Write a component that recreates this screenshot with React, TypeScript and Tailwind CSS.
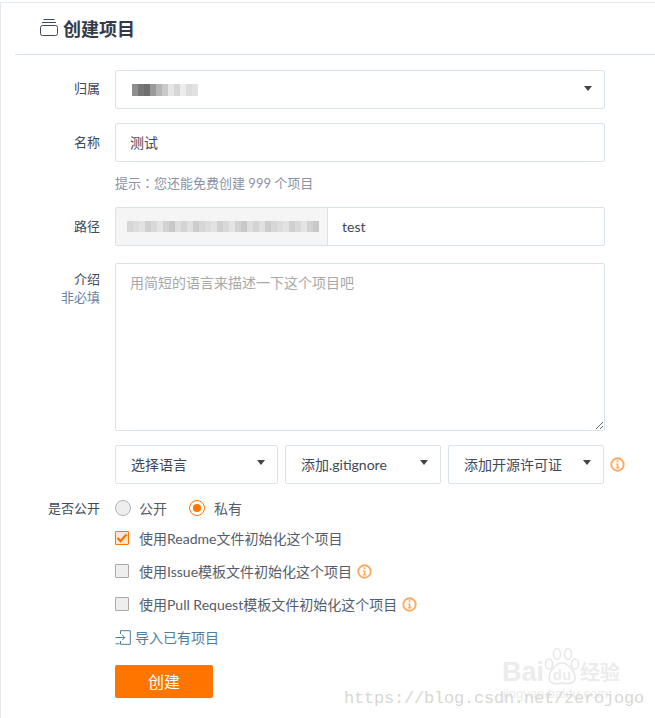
import React from 'react';

const font = '[font-family:"Lato","Noto_Sans_CJK_SC",sans-serif]';

// blurred-out account names in the original shot
const ownerBlur = ['#8f8f8f', '#777777', '#6f6f6f', '#9a9a9a', '#b5b5b5', '#c9c9c9', '#e6e6e6', '#d6d6d6', '#ececec', '#dcdcdc', '#e2e2e2'];
const pathBlur = ['#d6d6d6', '#dcdcdc', '#e2e2e2', '#cfcfcf', '#d9d9d9', '#e4e4e4', '#d2d2d2', '#c8c8c8', '#dedede', '#d4d4d4', '#e0e0e0', '#cccccc'];

const Caret = () => (
  <svg width="8" height="5" viewBox="0 0 8 5" className="shrink-0">
    <path d="M0 0h8L4 5z" fill="#444444" />
  </svg>
);

const InfoIcon = () => (
  <svg width="15" height="15" viewBox="0 0 15 15" className="shrink-0">
    <circle cx="7.5" cy="7.5" r="6.2" fill="none" stroke="#ffa95e" strokeWidth="1.9" />
    <rect x="6.6" y="3.4" width="1.9" height="1.9" fill="#ffa95e" />
    <path d="M5.8 6.4h2.600v3.900h1v1.100H5.700v-1.100h1.100V7.500h-1z" fill="#ffa95e" />
  </svg>
);

const Row = ({ label, sub, labelPad, className, children }: { label?: string; sub?: string; labelPad?: string; className?: string; children: React.ReactNode }) => (
  <div className={`flex gap-[15px] ${className ?? ''}`}>
    <div className={`w-[99px] shrink-0 text-right text-[13px] leading-[18px] text-[#40485b] ${labelPad ?? ''}`}>
      {label}
      {sub && <div className="text-[#6a7f9c]">{sub}</div>}
    </div>
    <div className="w-[490px] min-w-0">{children}</div>
  </div>
);

const DropDown = ({ label, width }: { label: string; width: string }) => (
  <div className={`flex h-[39px] shrink-0 items-center justify-between rounded-[2px] border border-[#dce3e8] pl-[15px] pr-[12px] text-[14px] text-[#40485b] ${width}`}>
    <span>{label}</span>
    <span className="mb-[4px]"><Caret /></span>
  </div>
);

const CheckRow = ({ label, checked, info, className }: { label: string; checked?: boolean; info?: boolean; className?: string }) => (
  <div className={`flex h-[20px] items-center text-[14px] text-[#555c6b] ${className ?? ''}`}>
    {checked ? (
      <span className="mr-[10px] flex h-[14px] w-[14px] items-center justify-center rounded-[1px] border border-[#ff7500] bg-[#fbe6d3]">
        <svg width="12" height="10" viewBox="0 0 12 10">
          <path d="M1.5 5l3 3 6-6.500" fill="none" stroke="#ff7500" strokeWidth="2.4" />
        </svg>
      </span>
    ) : (
      <span className="mr-[10px] h-[14px] w-[14px] rounded-[1px] border border-[#a9a9a9] bg-[#eeeeee]" />
    )}
    <span>{label}</span>
    {info && <span className="ml-[5px] flex"><InfoIcon /></span>}
  </div>
);

export default function App() {
  return (
    <div className={`relative h-[718px] w-[655px] overflow-hidden bg-white ${font}`}>
      <div className="mt-[2px] h-[718px] border-l border-t border-[#e3e9ed]">
        <div className="ml-[14px] flex h-[52px] items-center border-b border-[#dce3e8] pl-[24px] pt-[2px]">
          <svg width="20" height="19" viewBox="0 0 20 19" className="mb-[5px] mr-[4px] shrink-0">
            <path d="M4.500 1.500h11M3 4.500h14" stroke="#40485b" strokeWidth="1" fill="none" />
            <rect x="1.500" y="7.500" width="17" height="10" rx="2" fill="none" stroke="#40485b" strokeWidth="1" />
          </svg>
          <h1 className="text-[18px] font-bold text-[#333a4a]">创建项目</h1>
        </div>

        <div className="pt-[15px]">
          <Row label="归属" labelPad="pt-[9px]">
            <div className="flex h-[39px] items-center justify-between rounded-[2px] border border-[#dce3e8] pl-[16px] pr-[12px]">
              <div className="flex">
                {ownerBlur.map((c, i) => (
                  <span key={i} className="h-[12px] w-[6px]" style={{ backgroundColor: c }} />
                ))}
              </div>
              <span className="mb-[2px]"><Caret /></span>
            </div>
          </Row>

          <Row label="名称" labelPad="pt-[10px]" className="mt-[14px]">
            <div className="flex h-[39px] items-center rounded-[2px] border border-[#dce3e8] px-[14px] text-[14px] text-[#40485b]">测试</div>
            <p className="mt-[12px] h-[18px] text-[13px] leading-[18px] text-[#8c92a4]">
              提示<span className="[font-family:'Noto_Sans_CJK_TC',sans-serif]">：</span>您还能免费创建 999 个项目
            </p>
          </Row>

          <Row label="路径" labelPad="pt-[10px]" className="mt-[15px]">
            <div className="flex h-[39px] rounded-[2px] border border-[#dce3e8] text-[14px] text-[#40485b]">
              <div className="flex w-[212px] items-center border-r border-[#dce3e8] bg-[#f5f5f5] pl-[11px]">
                <div className="flex">
                  {[...pathBlur, ...pathBlur, ...pathBlur].slice(0, 32).map((c, i) => (
                    <span key={i} className="h-[11px] w-[6px]" style={{ backgroundColor: c }} />
                  ))}
                </div>
              </div>
              <div className="flex items-center pl-[14px]">test</div>
            </div>
          </Row>

          <Row label="介绍" sub="非必填" labelPad="pt-[7px]" className="mt-[17px]">
            <textarea
              readOnly
              placeholder="用简短的语言来描述一下这个项目吧"
              className="block h-[168px] w-full rounded-[2px] border border-[#dce3e8] px-[14px] py-[9px] text-[14px] leading-[20px] outline-none placeholder:text-[#a8a8a8]"
            />
          </Row>

          <Row className="mt-[14px]">
            <div className="flex items-center">
              <DropDown label="选择语言" width="w-[163px]" />
              <span className="w-[7px] shrink-0" />
              <DropDown label="添加.gitignore" width="w-[156px]" />
              <span className="w-[7px] shrink-0" />
              <DropDown label="添加开源许可证" width="w-[156px]" />
              <span className="mb-[1px] ml-[6px] flex shrink-0"><InfoIcon /></span>
            </div>
          </Row>

          <Row label="是否公开" className="mt-[15px]">
            <div className="flex h-[18px] items-center text-[14px] text-[#555c6b]">
              <span className="mr-[8px] h-[16px] w-[16px] rounded-full border border-[#b5b5b5] bg-[#eeeeee]" />
              <span>公开</span>
              <span className="ml-[22px] mr-[9px] flex h-[16px] w-[16px] items-center justify-center rounded-full border border-[#ff7500]">
                <span className="h-[8px] w-[8px] rounded-full bg-[#ff7500]" />
              </span>
              <span>私有</span>
            </div>
          </Row>

          <Row className="mt-[11px]">
            <CheckRow label="使用Readme文件初始化这个项目" checked />
            <CheckRow label="使用Issue模板文件初始化这个项目" info className="mt-[13px]" />
            <CheckRow label="使用Pull Request模板文件初始化这个项目" info className="mt-[13px]" />
            <div className="mt-[13px] flex h-[20px] items-center text-[14px] text-[#4f7f9f]">
              <svg width="16" height="15" viewBox="0 0 16 15" className="mr-[4px] shrink-0">
                <path d="M5.500 4V.7h9.800v13.600H5.500V11M.5 7.500h9M7 4.700l2.800 2.800L7 10.300M.5 13.800h4" fill="none" stroke="#4f7f9f" strokeWidth="1" />
              </svg>
              <span>导入已有项目</span>
            </div>
            <button className="mt-[18px] flex h-[33px] w-[98px] items-center justify-center rounded-[2px] bg-[#ff7500] text-[16px] text-white">创建</button>
          </Row>
        </div>
      </div>

      {/* watermarks over the shot */}
      <div className="absolute left-[502px] top-[647px] flex h-[38px] items-end text-[#ececec]">
        <span className="text-[27px] font-bold leading-[26px] [font-family:'Liberation_Sans',sans-serif]">Bai</span>
        <span className="relative w-[36px] text-center text-[15px] font-bold leading-[20px] [font-family:'Liberation_Sans',sans-serif]">
          <svg width="36" height="38" viewBox="0 0 36 38" className="absolute bottom-0 left-0">
            <g fill="none" stroke="#e8e8e8" strokeWidth="1.600">
              <ellipse cx="5" cy="17" rx="3.500" ry="5" />
              <ellipse cx="13" cy="7" rx="3.500" ry="5.500" />
              <ellipse cx="24" cy="7" rx="3.500" ry="5.500" />
              <ellipse cx="31" cy="17" rx="3.500" ry="5" />
              <path d="M18 16c-6 0-13 8-13 15 0 5 6 7 13 5 7 2 13 0 13-5 0-7-7-15-13-15z" />
            </g>
          </svg>
          <span className="relative">du</span>
        </span>
        <span className="text-[20px] font-bold leading-[26px] [font-family:'Noto_Sans_CJK_SC',sans-serif]">经验</span>
      </div>
      <div className="absolute left-[503px] top-[686px] text-[13px] leading-[16px] text-[#ececec] [font-family:'Liberation_Sans',sans-serif]">jingyan.baidu.com</div>
      <div className="absolute left-[344px] top-[688px] text-[17px] leading-[22px] tracking-[-0.2px] text-[#d8d8d0] [font-family:'Liberation_Mono',monospace]">https://blog.csdn.net/zerojogo</div>
    </div>
  );
}
